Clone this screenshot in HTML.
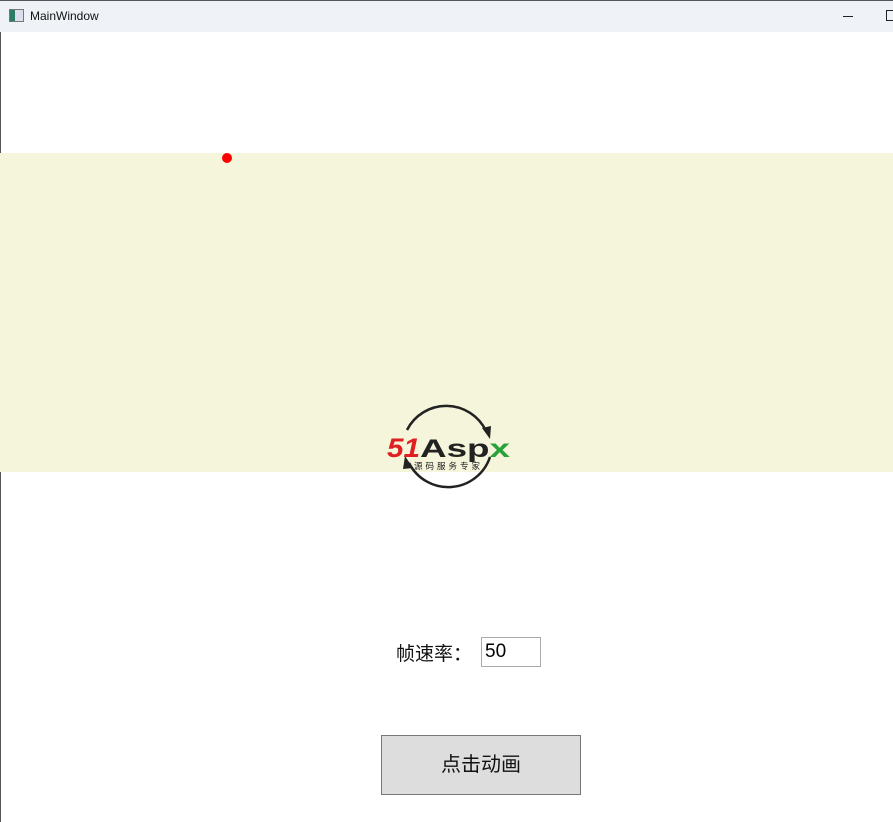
<!DOCTYPE html>
<html><head><meta charset="utf-8"><style>
body{margin:0;width:893px;height:822px;overflow:hidden;background:#fff;font-family:"Liberation Sans","Noto Sans CJK SC",sans-serif;position:relative}
.tb{position:absolute;left:0;top:0;width:893px;height:31px;background:#eff3f8;border-top:1px solid #555}
.t{position:absolute;left:30px;top:8px;font-size:12px;color:#111}
.band{position:absolute;left:0;top:153px;width:893px;height:319px;background:#f5f5dc}
.dot{position:absolute;left:222px;top:153px;width:10px;height:10px;border-radius:50%;background:#f00}
</style></head><body>
<div class="tb">
<div style="position:absolute;left:9px;top:8px;width:13px;height:11px;border:1px solid #777;background:linear-gradient(90deg,#2a7b6a 0 40%,#dde 40%)"></div>
<div class="t">MainWindow</div>
<div style="position:absolute;left:843px;top:15px;width:10px;height:1px;background:#222"></div>
<div style="position:absolute;left:886px;top:9px;width:9px;height:9px;border:1px solid #222"></div>
</div>
<div style="position:absolute;left:0;top:32px;width:1px;height:790px;background:#555"></div>
<div class="band"></div>
<div class="dot"></div>
<svg style="position:absolute;left:380px;top:395px" width="140" height="105" viewBox="0 0 140 105">
<path d="M27 35 A44 44 0 0 1 106 36" fill="none" stroke="#222" stroke-width="2.5"/>
<path d="M102 33 L110 44 L111 31 Z" fill="#222"/>
<path d="M110 62 A44 44 0 0 1 29 68" fill="none" stroke="#222" stroke-width="2.5"/>
<path d="M33 73 L25 61 L23 74 Z" fill="#222"/>
<text x="7" y="62" font-family="Liberation Sans" font-weight="bold" font-style="italic" font-size="27" fill="#e02020" textLength="33" lengthAdjust="spacingAndGlyphs">51</text>
<text x="40" y="62" font-family="Liberation Sans" font-weight="bold" font-size="25" fill="#222" textLength="90" lengthAdjust="spacingAndGlyphs">Asp<tspan fill="#2aa23a">x</tspan></text>
<text x="34" y="74" font-family="Noto Sans CJK SC" font-size="8.5" fill="#222" textLength="66" lengthAdjust="spacing">源码服务专家</text>
</svg>
<div style="position:absolute;left:396px;top:639px;font-size:19px;color:#111">帧速率：</div>
<div style="position:absolute;left:481px;top:637px;border:1px solid #aaa;font-size:19px;line-height:28px;padding-left:3px;box-sizing:border-box;width:60px;height:30px">50</div>
<div style="position:absolute;left:381px;top:735px;width:198px;height:58px;border:1px solid #777;background:#dddddd;font-size:20px;text-align:center;line-height:58px;color:#111">点击动画</div>
</body></html>
